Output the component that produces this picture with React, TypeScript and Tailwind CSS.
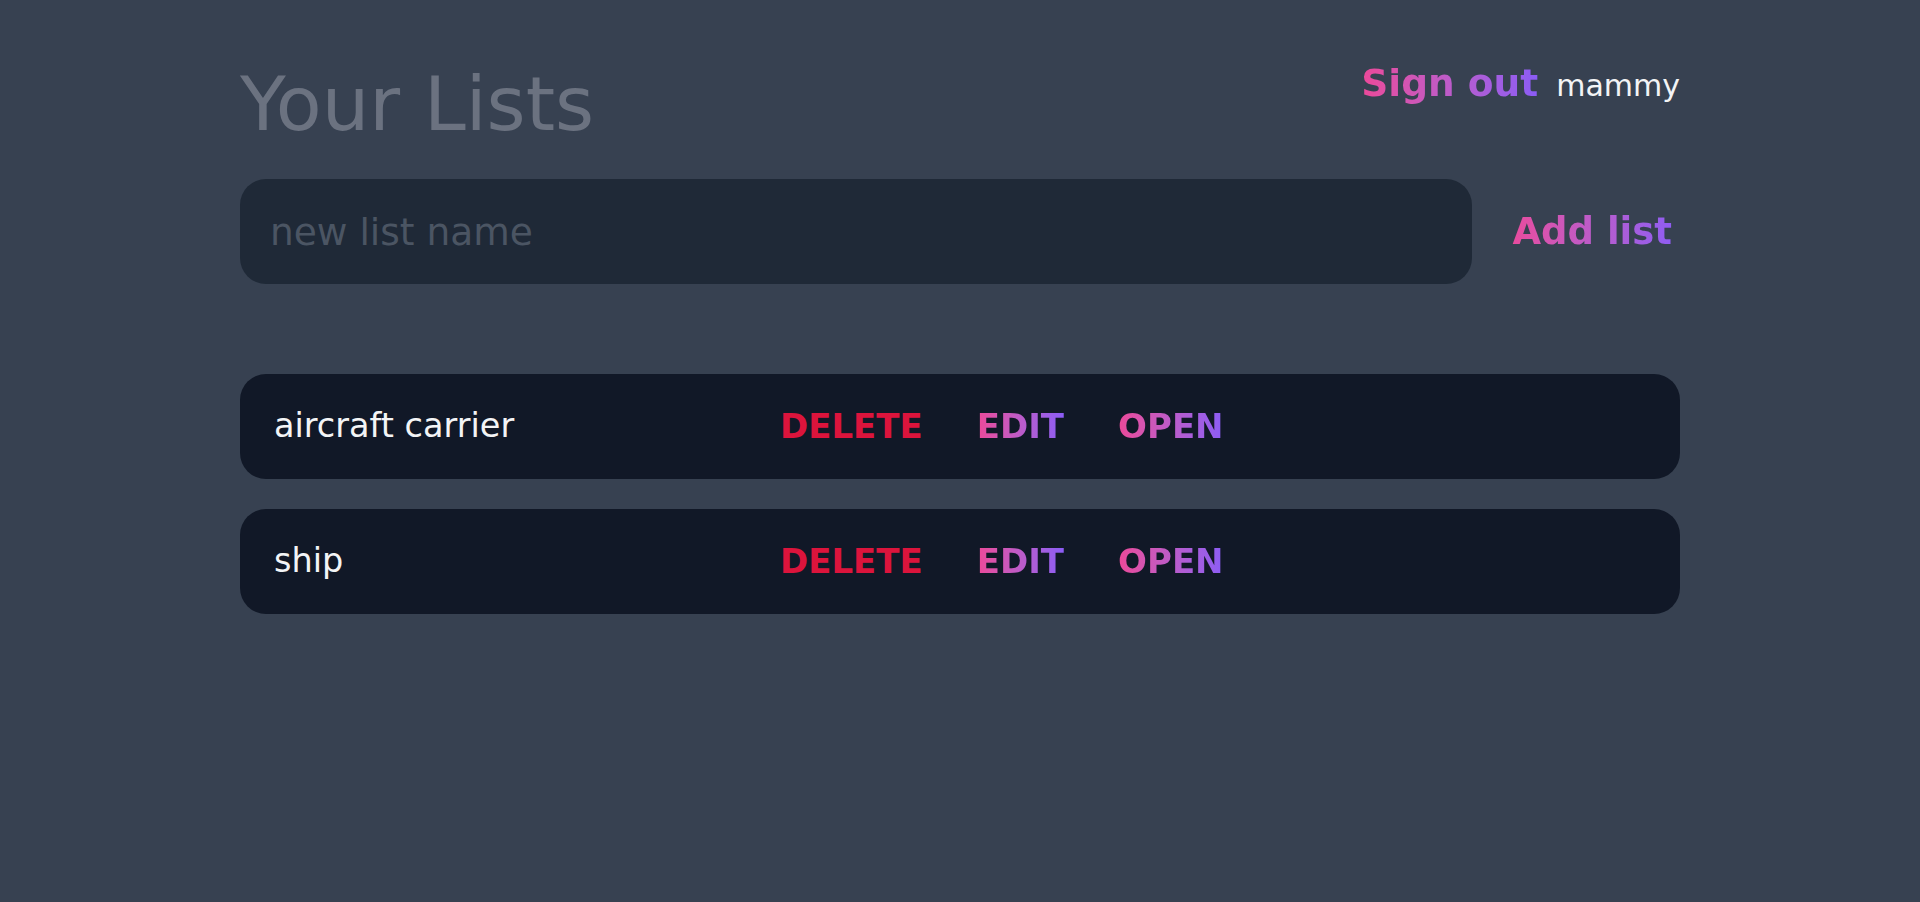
import React, { useState } from 'react';

type ListItem = {
  id: number;
  name: string;
};

const gradientText =
  'bg-gradient-to-r from-[#ec4899] to-[#8b5cf6] bg-clip-text text-transparent';

const App = () => {
  const [name, setName] = useState('');
  const [lists, setLists] = useState<ListItem[]>([
    { id: 1, name: 'aircraft carrier' },
    { id: 2, name: 'ship' }
  ]);

  const addList = () => {
    if (!name.trim()) return;
    setLists([...lists, { id: Date.now(), name: name.trim() }]);
    setName('');
  };

  const removeList = (id: number) => {
    setLists(lists.filter((l) => l.id !== id));
  };

  return (
    <div className="min-h-screen bg-[#374151] font-['DejaVu_Sans',sans-serif]">
      <div className="w-3/4 mx-auto pt-[62px]">
        <header className="flex justify-between items-start">
          <h1 className="text-[75px] leading-[84px] text-[#6b7280]">Your Lists</h1>
          <div className="flex items-baseline gap-[18px] leading-[43px]">
            <button className={`text-[37.5px] font-bold ${gradientText}`}>Sign out</button>
            <span className="text-[30px] text-[#f3f4f6]">mammy</span>
          </div>
        </header>

        <div className="mt-[33px] flex items-center gap-8">
          <input
            value={name}
            onChange={(e) => setName(e.target.value)}
            placeholder="new list name"
            className="flex-1 h-[105px] rounded-[26px] bg-[#1f2937] px-[30px] text-[37.5px] text-[#f3f4f6] placeholder:text-[#4b5563] outline-none"
          />
          <button onClick={addList} className={`px-2 text-[37px] font-bold ${gradientText}`}>
            Add list
          </button>
        </div>

        <ul className="mt-[90px] flex flex-col gap-[30px]">
          {lists.map((list) => (
            <li
              key={list.id}
              className="h-[105px] rounded-[26px] bg-[#111827] pl-[34px] flex items-center"
            >
              <span className="w-[506px] text-[33.5px] text-[#f3f4f6]">{list.name}</span>
              <div className="flex items-center gap-[54px] text-[34px] font-bold">
                <button onClick={() => removeList(list.id)} className="text-[#dc143c]">
                  DELETE
                </button>
                <button className={gradientText}>EDIT</button>
                <button className={gradientText}>OPEN</button>
              </div>
            </li>
          ))}
        </ul>
      </div>
    </div>
  );
};

export default App;
